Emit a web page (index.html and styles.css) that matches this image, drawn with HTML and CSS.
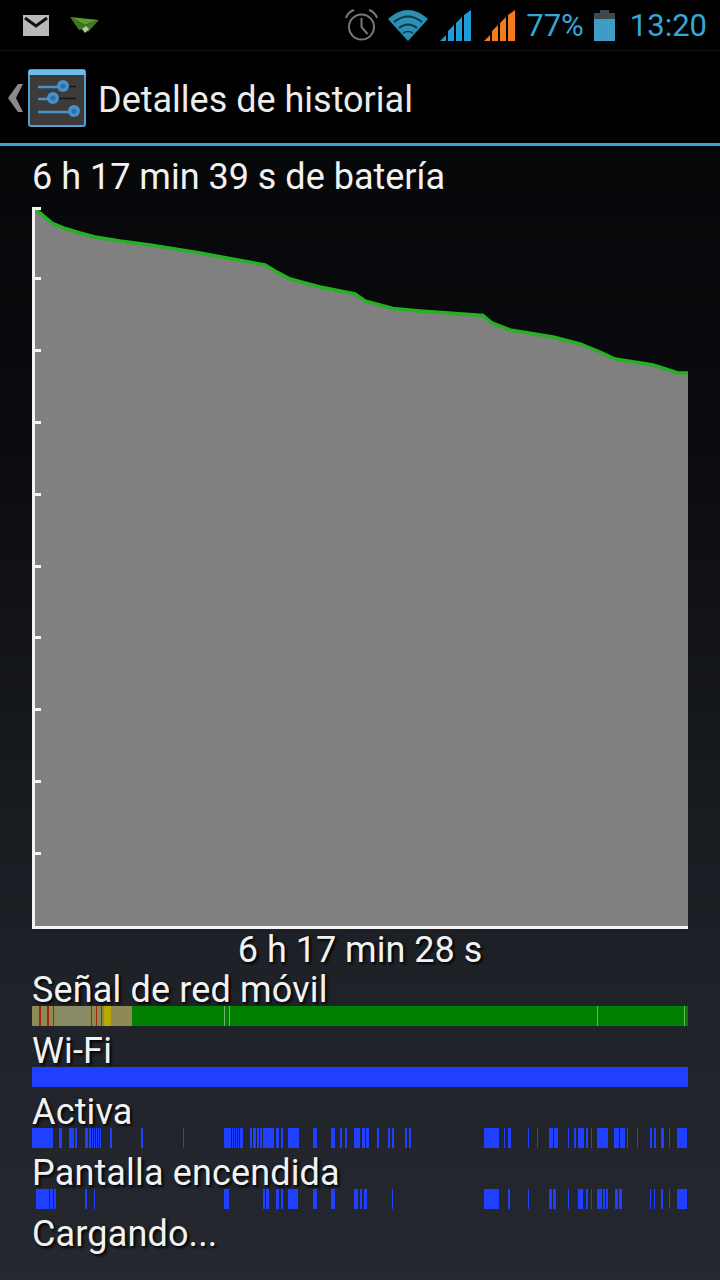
FILE: index.html
```html
<!DOCTYPE html>
<html lang="es">
<head>
  <meta charset="UTF-8">
  <title>Detalles de historial</title>
  <meta name="viewport" content="width=device-width, initial-scale=1.0">
  <link rel="stylesheet" href="styles.css">
</head>
<body>
  <div class="status-bar">
    <svg class="ic-mail" width="26" height="21" viewBox="0 0 26 21">
      <rect width="26" height="21" fill="#b9b9b9"/>
      <path d="M2 3l11 8 11-8" fill="none" stroke="#111" stroke-width="3"/>
    </svg>
    <svg class="ic-plane" width="30" height="18" viewBox="0 0 30 18">
      <path d="M0 1l29 3-14 5z" fill="#5d9a2c"/>
      <path d="M0 1l15 8 14-5-11 12-4-3-5 1z" fill="#3f7a1e"/>
      <path d="M12 13l4-3 3 3-4 4z" fill="#b9c4ae"/>
    </svg>
    <div class="status-right">
      <svg class="ic-alarm" width="33" height="32" viewBox="0 0 33 32">
        <circle cx="16.500" cy="18" r="12.500" fill="none" stroke="#787878" stroke-width="2"/>
        <path d="M16.500 9v9l6 7" fill="none" stroke="#787878" stroke-width="2"/>
        <path d="M1 9q2-6 8-8M32 9q-2-6-8-8" fill="none" stroke="#787878" stroke-width="2"/>
      </svg>
      <svg class="ic-wifi" width="40" height="31" viewBox="0 0 40 31">
        <path d="M0 9q20-18 40 0L20 31z" fill="#2a8fb2"/>
        <path d="M6 12q14-11 28 0M11 18q9-7 18 0" fill="none" stroke="#0d3a4a" stroke-width="2"/>
        <path d="M15 23q5-3 10 0" fill="none" stroke="#0d3a4a" stroke-width="1.500"/>
      </svg>
      <svg class="ic-signal" width="32" height="31" viewBox="0 0 32 31">
        <path d="M0 31l6-6v6zM8 31v-10l6-6v16zM16 31v-18l6-6v24zM24 31v-26l7-5v31z" fill="#1f9bd8"/>
      </svg>
      <svg class="ic-signal last" width="32" height="31" viewBox="0 0 32 31">
        <path d="M0 31l6-6v6zM8 31v-10l6-6v16zM16 31v-18l6-6v24zM24 31v-26l7-5v31z" fill="#f47a20"/>
      </svg>
      <span class="status-text pct">77%</span>
      <svg class="ic-battery" width="21" height="31" viewBox="0 0 21 31">
        <path d="M6 0h9v3h-9zM0 3h21v7h-21z" fill="#3c4a50"/>
        <rect y="9" width="21" height="22" fill="#3f9cc5"/>
      </svg>
      <span class="status-text clock">13:20</span>
    </div>
  </div>

  <div class="action-bar">
    <svg class="ic-back" width="15" height="28" viewBox="0 0 15 28">
      <path d="M10 0h5l-7 14 7 14h-5l-10-14z" fill="#8a8a8a"/>
    </svg>
    <svg class="ic-settings" width="58" height="58" viewBox="0 0 58 58">
      <rect x="1" y="1" width="56" height="56" rx="2" fill="#3d3b3a" stroke="#4f9fd2" stroke-width="2"/>
      <rect x="1" y="1" width="56" height="5" fill="#6cbbe8"/>
      <path d="M10 18h26M10 30h16M10 43h36" stroke="#4a90c8" stroke-width="2.500"/>
      <path d="M36 17.500h12M26 29.500h22" stroke="#161616" stroke-width="1.500"/>
      <circle cx="35" cy="17" r="6" fill="#4a90c8"/>
      <circle cx="25" cy="29" r="6" fill="#4a90c8"/>
      <circle cx="46" cy="42" r="6" fill="#4a90c8"/>
      <circle cx="35" cy="17" r="2.500" fill="#2f6fa8"/>
      <circle cx="25" cy="29" r="2.500" fill="#2f6fa8"/>
      <circle cx="46" cy="42" r="2.500" fill="#2f6fa8"/>
    </svg>
    <h1 class="title">Detalles de historial</h1>
  </div>
  <div class="action-line"></div>

  <div class="content">
    <div class="total">6 h 17 min 39 s de batería</div>

    <svg class="chart" width="656" height="722" viewBox="32 207 656 722">
      <path class="chart-fill" d="M34 209L40 213L52 223L65 228.500L80 233L95 237L120 241L150 245L200 253L265 265L275 271L290 279L320 287L355 294L365 301L393 308.500L420 311L483 315.500L492 323L510 330L553 337L580 344L600 352L615 359L653 365L678 373L688 373V926H34Z"/>
      <path class="chart-line" d="M34 209L40 213L52 223L65 228.500L80 233L95 237L120 241L150 245L200 253L265 265L275 271L290 279L320 287L355 294L365 301L393 308.500L420 311L483 315.500L492 323L510 330L553 337L580 344L600 352L615 359L653 365L678 373L688 373"/>
      <path class="chart-axis" d="M33.500 207V927.500H688M32 208.500H41M32 278.500H41M32 350.500H41M32 422.500H41M32 494.500H41M32 566.500H41M32 637.500H41M32 709.500H41M32 781.500H41M32 853.500H41"/>
    </svg>
    <div class="elapsed">6 h 17 min 28 s</div>

    <div class="row">
      <div class="label">Señal de red móvil</div>
      <svg class="strip" width="656" height="20" viewBox="32 0 656 20">
        <rect class="s-green" x="32" width="656" height="20"/>
        <rect class="s-olive" x="32" width="100" height="20"/>
        <rect class="s-grey" x="58" width="32" height="20"/>
        <rect class="s-red" x="39" width="2" height="20"/>
        <rect class="s-red" x="47" width="2" height="20"/>
        <rect class="s-red" x="53" width="1" height="20"/>
        <rect class="s-red" x="91" width="1" height="20"/>
        <rect class="s-red" x="96" width="1" height="20"/>
        <rect class="s-red" x="101" width="1" height="20"/>
        <rect class="s-yellow" x="104" width="7" height="20"/>
        <rect class="s-tick" x="224" width="1" height="20"/>
        <rect class="s-tick" x="229" width="1" height="20"/>
        <rect class="s-tick" x="597" width="1" height="20"/>
        <rect class="s-tick" x="684" width="1" height="20"/>
      </svg>
    </div>

    <div class="row">
      <div class="label">Wi-Fi</div>
      <svg class="strip" width="656" height="20" viewBox="32 0 656 20">
        <rect class="s-blue" x="32" width="656" height="20"/>
      </svg>
    </div>

    <div class="row">
      <div class="label">Activa</div>
      <svg class="strip" width="656" height="20" viewBox="32 0 656 20">
        <path class="s-blue" d="M32 0h21v20h-21zM59 0h3v20h-3zM69 0h5v20h-5zM75 0h2v20h-2zM85 0h3v20h-3zM89 0h2v20h-2zM92 0h1v20h-1zM94 0h1v20h-1zM96 0h1v20h-1zM98 0h1v20h-1zM100 0h1v20h-1zM110 0h2v20h-2zM141 0h2v20h-2zM183 0h1v20h-1zM224 0h7v20h-7zM232 0h1v20h-1zM234 0h1v20h-1zM236 0h1v20h-1zM238 0h1v20h-1zM240 0h3v20h-3zM250 0h2v20h-2zM253 0h3v20h-3zM257 0h2v20h-2zM260 0h2v20h-2zM263 0h11v20h-11zM276 0h3v20h-3zM281 0h2v20h-2zM288 0h11v20h-11zM313 0h4v20h-4zM331 0h4v20h-4zM340 0h2v20h-2zM345 0h2v20h-2zM354 0h6v20h-6zM362 0h3v20h-3zM366 0h3v20h-3zM377 0h2v20h-2zM388 0h2v20h-2zM392 0h2v20h-2zM405 0h2v20h-2zM409 0h2v20h-2zM484 0h15v20h-15zM504 0h1v20h-1zM508 0h3v20h-3zM528 0h1v20h-1zM537 0h1v20h-1zM549 0h4v20h-4zM554 0h4v20h-4zM568 0h1v20h-1zM574 0h2v20h-2zM578 0h6v20h-6zM586 0h2v20h-2zM591 0h1v20h-1zM597 0h11v20h-11zM614 0h5v20h-5zM620 0h5v20h-5zM627 0h1v20h-1zM637 0h1v20h-1zM650 0h2v20h-2zM654 0h2v20h-2zM661 0h3v20h-3zM669 0h1v20h-1zM677 0h10v20h-10z"/>
      </svg>
    </div>

    <div class="row">
      <div class="label">Pantalla encendida</div>
      <svg class="strip" width="656" height="20" viewBox="32 0 656 20">
        <path class="s-blue" d="M36 0h13v20h-13zM50 0h3v20h-3zM54 0h2v20h-2zM85 0h2v20h-2zM94 0h1v20h-1zM224 0h5v20h-5zM263 0h2v20h-2zM266 0h3v20h-3zM276 0h3v20h-3zM281 0h2v20h-2zM288 0h10v20h-10zM313 0h4v20h-4zM331 0h4v20h-4zM354 0h4v20h-4zM360 0h2v20h-2zM364 0h3v20h-3zM392 0h1v20h-1zM484 0h15v20h-15zM508 0h2v20h-2zM528 0h1v20h-1zM549 0h3v20h-3zM553 0h3v20h-3zM568 0h1v20h-1zM578 0h5v20h-5zM586 0h2v20h-2zM591 0h1v20h-1zM597 0h5v20h-5zM603 0h2v20h-2zM606 0h2v20h-2zM615 0h3v20h-3zM619 0h3v20h-3zM650 0h1v20h-1zM654 0h1v20h-1zM661 0h2v20h-2zM669 0h1v20h-1zM677 0h10v20h-10z"/>
      </svg>
    </div>

    <div class="label charging">Cargando...</div>
  </div>
</body>
</html>
```

FILE: styles.css
```css
html, body {
  margin: 0;
  padding: 0;
}
body {
  width: 720px;
  height: 1280px;
  overflow: hidden;
  font-family: Roboto, "Liberation Sans", sans-serif;
  color: #f2f2f2;
  background: #000;
}
svg {
  display: block;
  flex: none;
}
.status-bar {
  display: flex;
  align-items: center;
  height: 50px;
  padding: 0 13px 0 23px;
  background: #000;
  border-bottom: 1px solid #121212;
}
.ic-mail {
  margin-right: 21px;
}
.status-right {
  display: flex;
  align-items: center;
  margin-left: auto;
}
.ic-wifi {
  margin: 0 12px 0 10px;
}
.ic-signal {
  margin-right: 12px;
}
.ic-signal.last {
  margin-right: 11px;
}
.status-text {
  font-size: 31px;
  color: #35a7d6;
}
.pct {
  margin: 0 10px 0 -1px;
}
.clock {
  margin-left: 15px;
}
.action-bar {
  display: flex;
  align-items: center;
  box-sizing: border-box;
  height: 92px;
  padding: 2px 0 0 8px;
  background: #000;
}
.ic-back {
  margin-right: 5px;
}
.ic-settings {
  margin-right: 12px;
}
.title {
  margin: 4px 0 0;
  font-size: 36px;
  font-weight: 400;
  color: #ececec;
}
.action-line {
  height: 3px;
  background: #33a5cf;
}
.content {
  height: 1134px;
  padding: 0 32px;
  background: linear-gradient(#060709, #0a0b0e 25%, #1f2329 75%, #25292f);
}
.total {
  height: 61px;
  padding-top: 10px;
  box-sizing: border-box;
  font-size: 36px;
  line-height: 42px;
}
.chart-fill {
  fill: #808080;
}
.chart-line {
  fill: none;
  stroke: #25b025;
  stroke-width: 3.500;
}
.chart-axis {
  fill: none;
  stroke: #f4f4f4;
  stroke-width: 3;
}
.elapsed {
  height: 36px;
  text-align: center;
  font-size: 36px;
  line-height: 42px;
  text-shadow: 2px 2px 3px #000;
}
.row {
  height: 61px;
}
.label {
  height: 41px;
  font-size: 36px;
  line-height: 50px;
  letter-spacing: 0.15px;
  text-shadow: 2px 2px 3px #000;
}
.strip {
  shape-rendering: crispEdges;
}
.s-green {
  fill: #008000;
}
.s-olive {
  fill: #8f8a55;
}
.s-grey {
  fill: #8b8a66;
}
.s-red {
  fill: #9c2a0a;
}
.s-yellow {
  fill: #b5a800;
}
.s-tick {
  fill: #6fae6f;
}
.s-blue {
  fill: #2040ff;
}
```
